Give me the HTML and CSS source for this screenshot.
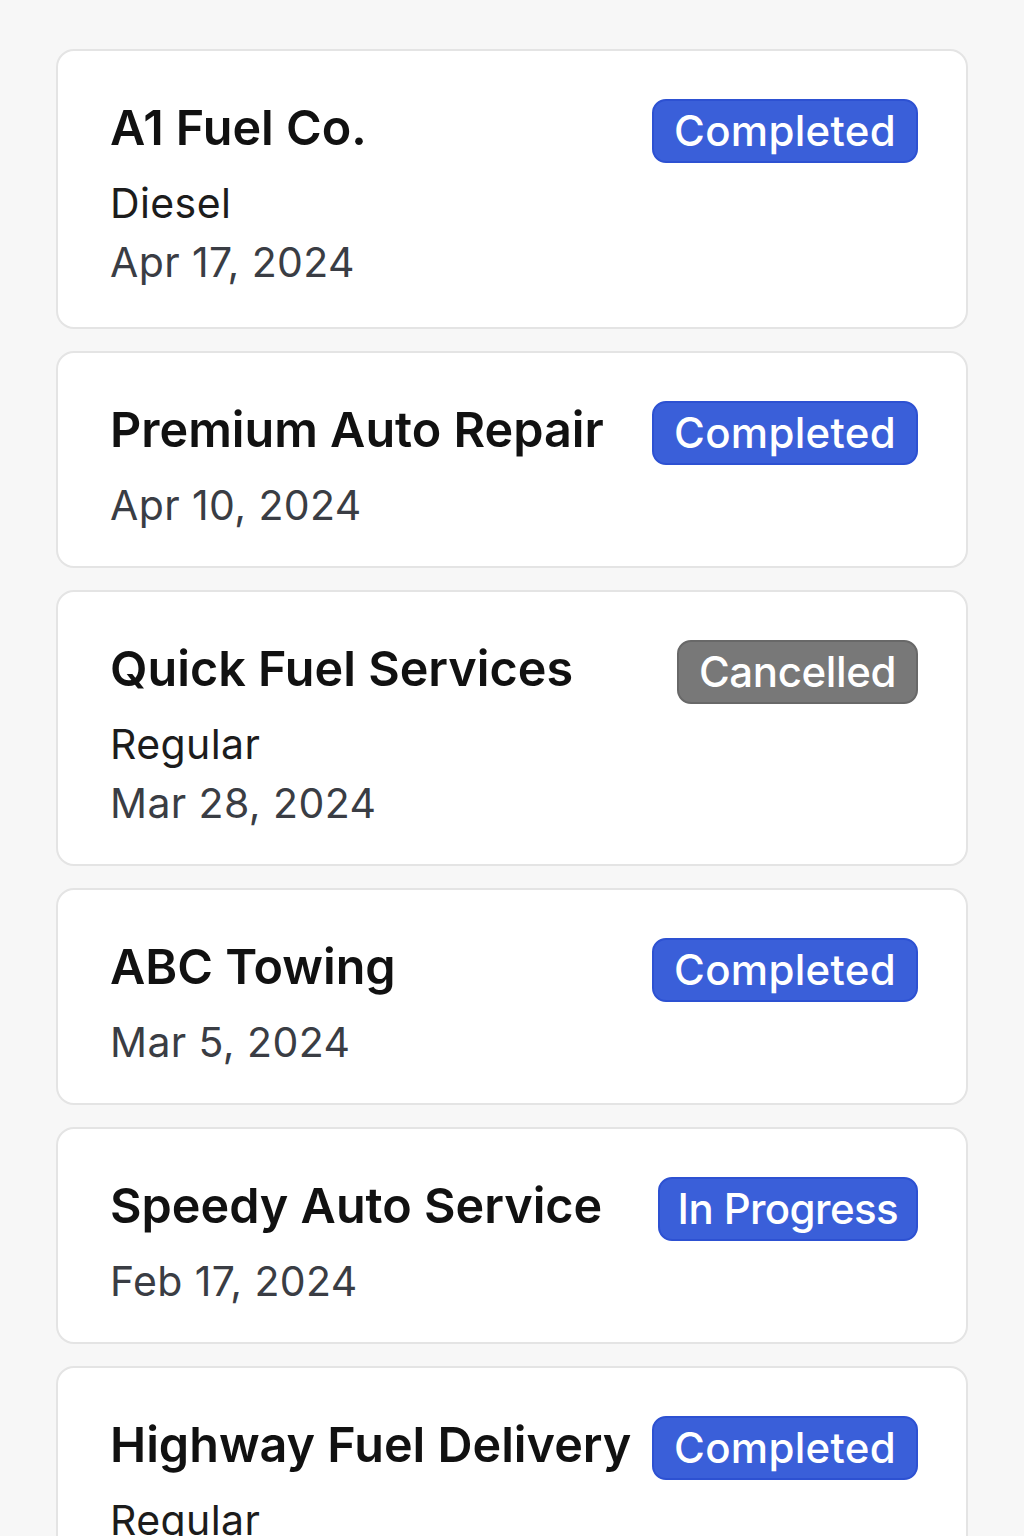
FILE: index.html
```html
<!DOCTYPE html>
<html lang="en">
<head>
<meta charset="utf-8">
<title>Orders</title>
<link rel="stylesheet" href="styles.css">
</head>
<body>
<main class="list">
  <article class="card">
    <div class="info">
      <h2 class="title">A1 Fuel Co.</h2>
      <p class="sub">Diesel</p>
      <p class="date">Apr 17, 2024</p>
    </div>
    <span class="badge badge-blue">Completed</span>
  </article>
  <article class="card">
    <div class="info">
      <h2 class="title">Premium Auto Repair</h2>
      <p class="date">Apr 10, 2024</p>
    </div>
    <span class="badge badge-blue">Completed</span>
  </article>
  <article class="card">
    <div class="info">
      <h2 class="title">Quick Fuel Services</h2>
      <p class="sub">Regular</p>
      <p class="date">Mar 28, 2024</p>
    </div>
    <span class="badge badge-gray">Cancelled</span>
  </article>
  <article class="card">
    <div class="info">
      <h2 class="title">ABC Towing</h2>
      <p class="date">Mar 5, 2024</p>
    </div>
    <span class="badge badge-blue">Completed</span>
  </article>
  <article class="card">
    <div class="info">
      <h2 class="title">Speedy Auto Service</h2>
      <p class="date">Feb 17, 2024</p>
    </div>
    <span class="badge badge-blue badge-tight">In Progress</span>
  </article>
  <article class="card">
    <div class="info">
      <h2 class="title">Highway Fuel Delivery</h2>
      <p class="sub">Regular</p>
      <p class="date">Feb 2, 2024</p>
    </div>
    <span class="badge badge-blue">Completed</span>
  </article>
</main>
</body>
</html>
```
FILE: styles.css
```css
* { box-sizing: border-box; }
html, body {
  margin: 0;
  padding: 0;
  background: #f7f7f7;
}
body {
  font-family: Inter, "Noto Sans", "Liberation Sans", sans-serif;
  color: #111;
}
.list {
  display: flex;
  flex-direction: column;
  gap: 22px;
  padding: 49px 56px 40px 56px;
}
.card {
  display: flex;
  justify-content: space-between;
  align-items: flex-start;
  gap: 12px;
  background: #fff;
  border: 2px solid #e4e4e4;
  border-radius: 18px;
  padding: 48px 48px 37px 52px;
}
.card:first-child {
  padding-bottom: 41px;
}
.info {
  display: flex;
  flex-direction: column;
  gap: 11px;
  min-width: 0;
}
.title {
  margin: 0 0 11px 0;
  font-size: 48.5px;
  line-height: 58px;
  font-weight: 600;
  color: #111;
  white-space: nowrap;
}
.sub, .date {
  margin: 0;
  font-size: 41px;
  line-height: 48px;
  font-weight: 400;
  letter-spacing: 0.4px;
  white-space: nowrap;
}
.sub { color: #1c1c1c; }
.date { color: #3a3d44; }
.badge {
  flex: none;
  display: inline-block;
  font-size: 42px;
  line-height: 60px;
  font-weight: 500;
  color: #fff;
  padding: 0 20px;
  border-radius: 14px;
  border: 2px solid transparent;
  white-space: nowrap;
  letter-spacing: 0.3px;
}
.badge-tight {
  letter-spacing: -0.6px;
  padding: 0 18px;
}
.badge-blue {
  background: #3a5fd9;
  border-color: #2d51d2;
}
.badge-gray {
  background: #787878;
  border-color: #686868;
  letter-spacing: -0.4px;
}
```
